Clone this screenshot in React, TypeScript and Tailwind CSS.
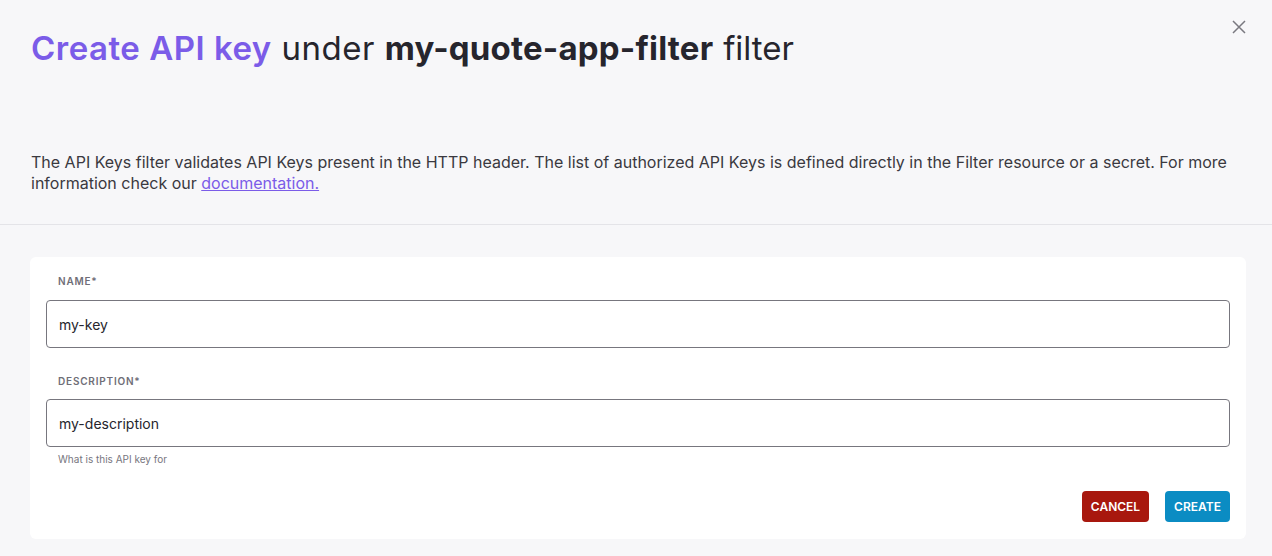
import React from "react";

export default function App() {
  return (
    <div
      className="w-[1272px] h-[556px] bg-[#f7f7f9] relative overflow-hidden text-[#26252d]"
      style={{ fontFamily: "Inter, 'Noto Sans', sans-serif" }}
    >
      <button className="absolute right-[25px] top-[19px] w-[16px] h-[16px] flex items-center justify-center text-[#7a7980]">
        <svg width="14" height="14" viewBox="0 0 14 14" fill="none" stroke="currentColor" strokeWidth="1.5">
          <path d="M1 1 L13 13 M13 1 L1 13" />
        </svg>
      </button>
      <div className="pt-[28px] px-[31px]">
        <h1 className="text-[33px] leading-[40px] tracking-[0.5px]">
          <span className="font-semibold text-[#7b5ce8]">Create API key</span>{" "}
          <span className="font-normal">under</span>{" "}
          <span className="font-bold tracking-[0.2px]">my-quote-app-filter</span>{" "}
          <span className="font-normal tracking-[0px]">filter</span>
        </h1>
        <p className="mt-[84px] text-[16px] leading-[21px] text-[#3a3940]">
          The API Keys filter validates API Keys present in the HTTP header. The list of authorized API Keys is defined directly in the Filter resource or a secret. For more information check our{" "}
          <a href="#" className="text-[#7b5ce8] underline">documentation.</a>
        </p>
      </div>
      <div className="mt-[30px] h-px bg-[#e4e4e8]" />
      <div className="pt-[32px] px-[30px] pr-[26px]">
        <div className="bg-white rounded-[6px] px-[16px] pt-[17px] pb-[17px]">
          <label className="block px-[12px] text-[10px] leading-[14px] font-semibold tracking-[0.8px] text-[#6f6e77]">NAME*</label>
          <div className="mt-[12px] h-[48px] border border-[#77767e] rounded-[4px] flex items-center px-[12px] text-[14px] text-[#26252d]">
            my-key
          </div>
          <label className="block px-[12px] mt-[26px] text-[10px] leading-[14px] font-semibold tracking-[0.8px] text-[#6f6e77]">DESCRIPTION*</label>
          <div className="mt-[11px] h-[48px] border border-[#77767e] rounded-[4px] flex items-center px-[12px] text-[14px] text-[#26252d]">
            my-description
          </div>
          <p className="mt-[5px] px-[12px] text-[10px] leading-[14px] text-[#77767e]">What is this API key for</p>
          <div className="mt-[25px] flex justify-end gap-[16px]">
            <button className="h-[31px] w-[67px] rounded-[4px] bg-[#a8180e] text-white text-[12px] font-semibold">CANCEL</button>
            <button className="h-[31px] w-[65px] rounded-[4px] bg-[#0b8cc3] text-white text-[12px] font-semibold">CREATE</button>
          </div>
        </div>
      </div>
    </div>
  );
}
